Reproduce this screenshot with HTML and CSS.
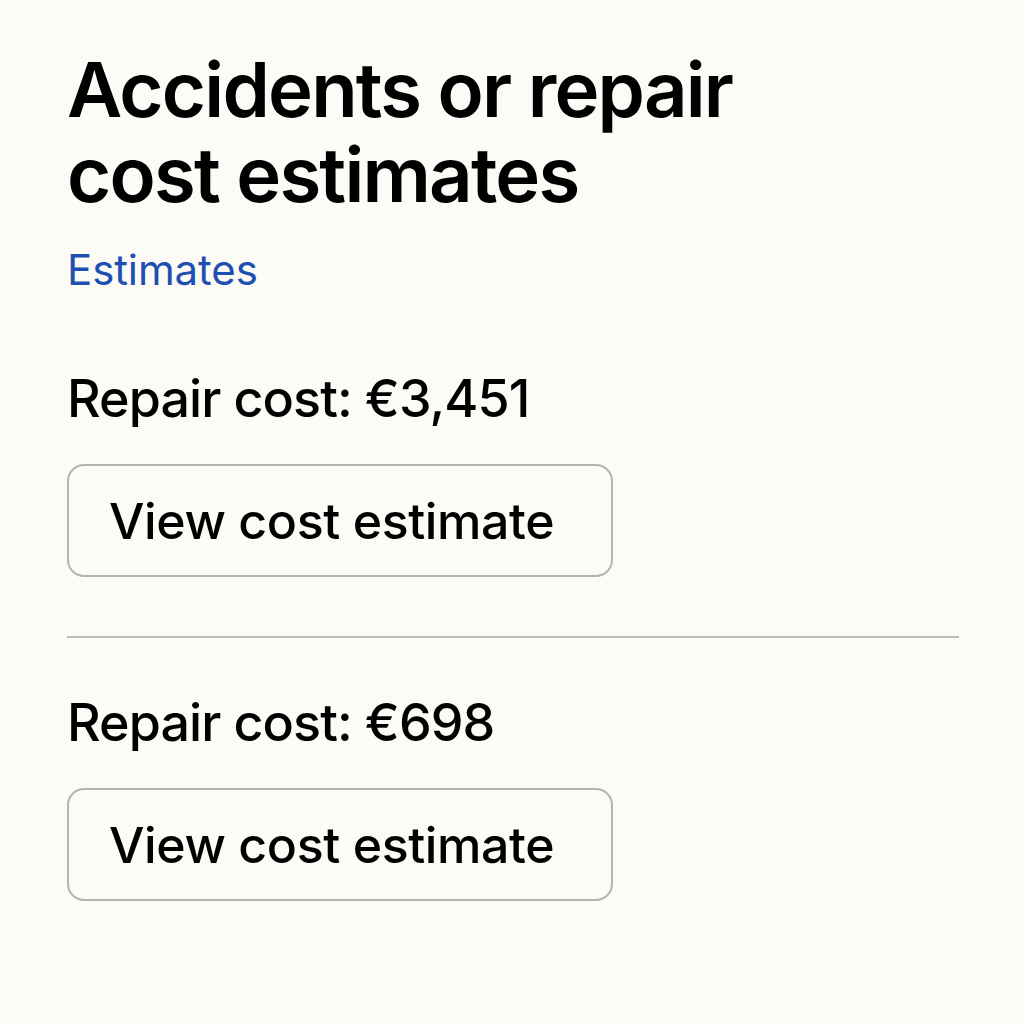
FILE: index.html
```html
<!DOCTYPE html>
<html lang="en">
<head>
<meta charset="utf-8">
<title>Accidents or repair cost estimates</title>
<link rel="stylesheet" href="styles.css">
</head>
<body>
<main class="page">
  <h1 class="title">Accidents or repair<br>cost estimates</h1>
  <a class="link" href="#">Estimates</a>
  <section class="estimate">
    <p class="cost">Repair cost: €3,451</p>
    <button class="btn" type="button">View cost estimate</button>
  </section>
  <hr class="divider">
  <section class="estimate">
    <p class="cost">Repair cost: €698</p>
    <button class="btn" type="button">View cost estimate</button>
  </section>
</main>
</body>
</html>
```
FILE: styles.css
```css
html, body {
  margin: 0;
  padding: 0;
  background: #fcfbf6;
}
body {
  font-family: Inter, "Liberation Sans", sans-serif;
  color: #000;
}
.page {
  padding: 47px 65px 0 67px;
  display: flex;
  flex-direction: column;
  align-items: flex-start;
}
.title {
  margin: 0;
  font-size: 76px;
  font-weight: 600;
  line-height: 85px;
  letter-spacing: -1.8px;
}
.link {
  margin: 28px 0 19px;
  font-size: 42px;
  line-height: 50px;
  color: #1f4fb0;
  text-decoration: none;
  letter-spacing: -0.1px;
}
.estimate {
  margin-top: 55px;
  display: flex;
  flex-direction: column;
  align-items: flex-start;
}
.cost {
  margin: 0;
  font-size: 52px;
  font-weight: 500;
  line-height: 60px;
  letter-spacing: -0.9px;
}
.btn {
  box-sizing: border-box;
  margin-top: 35px;
  width: 546px;
  height: 113px;
  border: 2px solid #b4b4b4;
  border-radius: 17px;
  background: transparent;
  font-family: inherit;
  font-size: 50px;
  font-weight: 500;
  color: #000;
  padding: 0 0 0 40px;
  text-align: left;
  letter-spacing: -0.4px;
}
.divider {
  align-self: stretch;
  margin: 59px 0 0;
  border: 0;
  border-top: 2px solid #bcbcbc;
  height: 0;
}
```
